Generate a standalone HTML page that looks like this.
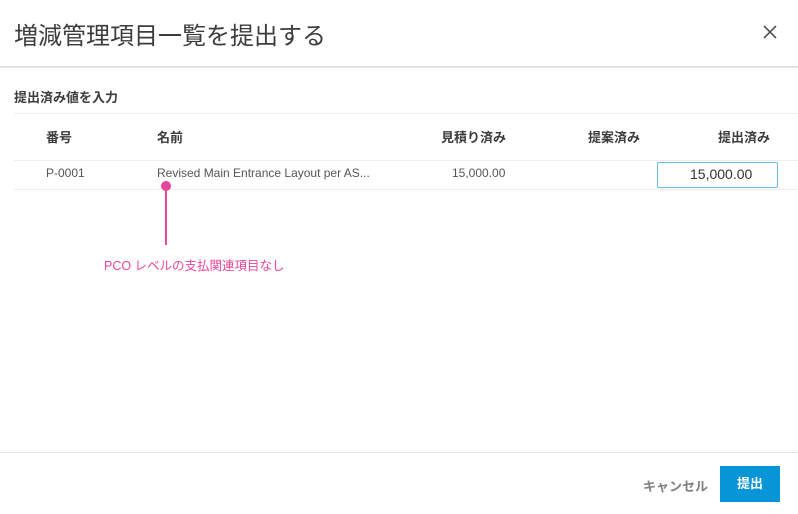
<!DOCTYPE html>
<html><head><meta charset="utf-8"><style>
body{margin:0;width:798px;height:514px;background:#fff;font-family:"Liberation Sans","Noto Sans CJK JP",sans-serif;position:relative;overflow:hidden;color:#3c3c3c}
.a{position:absolute;white-space:nowrap}
.h{font-weight:bold;font-size:13px;color:#3c3c3c}
.d{font-size:12px;color:#555}
</style></head><body>
<div class="a" style="left:14px;top:16px;font-size:24px;color:#3c3c3c">増減管理項目一覧を提出する</div>
<svg class="a" style="left:762px;top:24px" width="16" height="16"><path d="M2 2L14 14M14 2L2 14" stroke="#555" stroke-width="1.6"/></svg>
<div class="a" style="left:0;top:66px;width:798px;height:2px;background:#e2e2e2"></div>
<div class="a h" style="left:14px;top:87px">提出済み値を入力</div>
<div class="a" style="left:14px;top:113px;width:784px;height:1px;background:#eee"></div>
<div class="a h" style="left:46px;top:127px">番号</div>
<div class="a h" style="left:157px;top:127px">名前</div>
<div class="a h" style="left:441px;top:127px">見積り済み</div>
<div class="a h" style="left:588px;top:127px">提案済み</div>
<div class="a h" style="left:718px;top:127px">提出済み</div>
<div class="a" style="left:14px;top:160px;width:784px;height:1px;background:#eee"></div>
<div class="a d" style="left:46px;top:166px">P-0001</div>
<div class="a d" style="left:157px;top:166px">Revised Main Entrance Layout per AS...</div>
<div class="a d" style="left:452px;top:166px">15,000.00</div>
<div class="a" style="left:657px;top:162px;width:119px;height:24px;border:1px solid #6cbbe3;border-radius:2px;box-sizing:content-box"></div>
<div class="a" style="left:690px;top:166px;font-size:14px;color:#333">15,000.00</div>
<div class="a" style="left:14px;top:189px;width:784px;height:1px;background:#eee"></div>
<div class="a" style="left:161px;top:181px;width:10px;height:10px;border-radius:50%;background:#e8469a"></div>
<div class="a" style="left:165px;top:188px;width:2px;height:57px;background:#e8469a"></div>
<div class="a" style="left:104px;top:255px;font-size:12.5px;color:#e8469a">PCO レベルの支払関連項目なし</div>
<div class="a" style="left:0;top:452px;width:798px;height:1px;background:#e2e2e2"></div>
<div class="a" style="left:643px;top:476px;font-size:13px;font-weight:bold;color:#808080">キャンセル</div>
<div class="a" style="left:720px;top:466px;width:60px;height:36px;background:#0696d7;color:#fff;font-size:13px;font-weight:bold;text-align:center;line-height:36px">提出</div>
</body></html>
